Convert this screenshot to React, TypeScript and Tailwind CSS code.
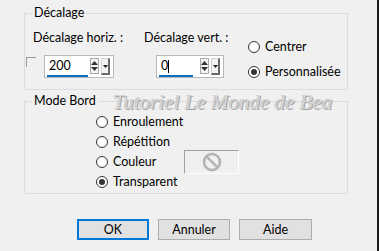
import React from "react";

function Radio({ checked }: { checked?: boolean }) {
  return (
    <span className="w-[12px] h-[12px] rounded-full border border-[#333333] bg-white flex items-center justify-center shrink-0">
      {checked && <span className="w-[6px] h-[6px] rounded-full bg-[#333333]" />}
    </span>
  );
}

function RadioRow({ label, checked }: { label: string; checked?: boolean }) {
  return (
    <div className="flex items-center gap-[5px] h-[20px]">
      <Radio checked={checked} />
      <span>{label}</span>
    </div>
  );
}

function Spin() {
  return (
    <div className="flex items-start gap-[2px] mt-[1px]">
      <div className="w-[9px] h-[16px] border border-[#a8a8a8] bg-[#f4f4f4] flex flex-col items-center justify-center gap-[2px]">
        <svg width="7" height="4" viewBox="0 0 7 4"><path d="M3.5 0 L7 4 L0 4Z" fill="#333" /></svg>
        <svg width="7" height="4" viewBox="0 0 7 4"><path d="M0 0 L7 0 L3.5 4Z" fill="#333" /></svg>
      </div>
      <div className="w-[9px] h-[17px] border-t border-l border-[#d0d0d0] border-r-2 border-b-2 border-r-[#6a6a6a] border-b-[#6a6a6a] bg-[#f4f4f4] flex items-center justify-center">
        <svg width="5" height="3" viewBox="0 0 5 3"><path d="M0 0 L5 0 L2.5 3Z" fill="#222" /></svg>
      </div>
    </div>
  );
}

function NumInput({ value, width, line, cursor }: { value: string; width: string; line: string; cursor?: boolean }) {
  return (
    <div className={`${width} h-[23px] border border-[#b8b8b8] bg-white flex items-start pl-[1px] pr-[3px] pt-[1px]`}>
      <div className="flex-1 flex flex-col h-[20px]">
        <div className="flex items-center h-[18px] pl-[3px] text-[12.5px]">
          <span>{value}</span>
          {cursor && <span className="w-[1px] h-[13px] bg-black" />}
        </div>
        <div className={`${line} h-[2px] bg-[#0a6fc2] ml-[1px]`} />
      </div>
      <Spin />
    </div>
  );
}

export default function App() {
  return (
    <div
      className="w-[379px] h-[251px] bg-[#f0f0f0] flex text-[12.5px] leading-[16px] text-black overflow-hidden"
      style={{ fontFamily: 'Lato, "Noto Sans", sans-serif' }}
    >
      <div className="flex-1 flex flex-col pl-[24px] pt-[5px] relative">
        <fieldset className="w-[324px] h-[85px] border border-[#dcdcdc]">
          <legend className="ml-[7px] px-[2px]">Décalage</legend>
          <div className="flex items-start">
            <div className="w-[119px] flex flex-col pl-[1px]">
              <span className="ml-[7px] mt-[9px]">Décalage horiz. :</span>
              <div className="flex items-start mt-[9px]">
                <span className="w-[10px] h-[10px] mt-[2px] border-t border-l border-[#9a9a9a]" />
                <div className="ml-[8px]">
                  <NumInput value="200" width="w-[70px]" line="w-[41px]" />
                </div>
              </div>
            </div>
            <div className="w-[104px] flex flex-col">
              <span className="mt-[9px]">Décalage vert. :</span>
              <div className="ml-[12px] mt-[9px]">
                <NumInput value="0" width="w-[68px]" line="w-[34px]" cursor />
              </div>
            </div>
            <div className="flex flex-col mt-[16px] gap-[5px]">
              <RadioRow label="Centrer" />
              <RadioRow label="Personnalisée" checked />
            </div>
          </div>
        </fieldset>
        <fieldset className="w-[324px] h-[101px] border border-[#dcdcdc] mt-[3px]">
          <legend className="ml-[7px] px-[2px]">Mode Bord</legend>
          <div className="flex flex-col ml-[71px] mt-[3px]">
            <RadioRow label="Enroulement" />
            <RadioRow label="Répétition" />
            <div className="flex items-center h-[20px]">
              <div className="w-[88px]">
                <RadioRow label="Couleur" />
              </div>
              <div className="w-[55px] h-[24px] shrink-0 border-t border-l border-[#a0a0a0] border-r border-b border-r-white border-b-white flex items-center justify-center">
                <svg width="20" height="20" viewBox="0 0 20 20">
                  <circle cx="10" cy="10" r="8" fill="none" stroke="#b4b4b4" strokeWidth="2.6" />
                  <path d="M4.6 4.6 L15.4 15.4" stroke="#b4b4b4" strokeWidth="2.6" />
                </svg>
              </div>
            </div>
            <RadioRow label="Transparent" checked />
          </div>
        </fieldset>
        <div
          className="absolute left-[113px] top-[92px] text-[21px] leading-[21px] italic text-[#d6d6d6] whitespace-nowrap"
          style={{ fontFamily: '"Liberation Serif", serif', textShadow: "1px 1px 0 #a4a4a4, -0.5px -0.5px 0 #bcbcbc" }}
        >
          Tutoriel Le Monde de Bea
        </div>
        <div className="flex ml-[53px] mt-[25px] gap-[9px]">
          <button className="w-[72px] h-[21px] border-2 border-[#0078d7] bg-[#e1e1e1] flex items-center justify-center">OK</button>
          <button className="w-[72px] h-[21px] border border-[#adadad] bg-[#e1e1e1] flex items-center justify-center">Annuler</button>
          <button className="w-[73px] h-[21px] border border-[#adadad] bg-[#e1e1e1] flex items-center justify-center">Aide</button>
        </div>
      </div>
      <div className="w-[2px] h-full bg-[#1c1c1c]" />
    </div>
  );
}
